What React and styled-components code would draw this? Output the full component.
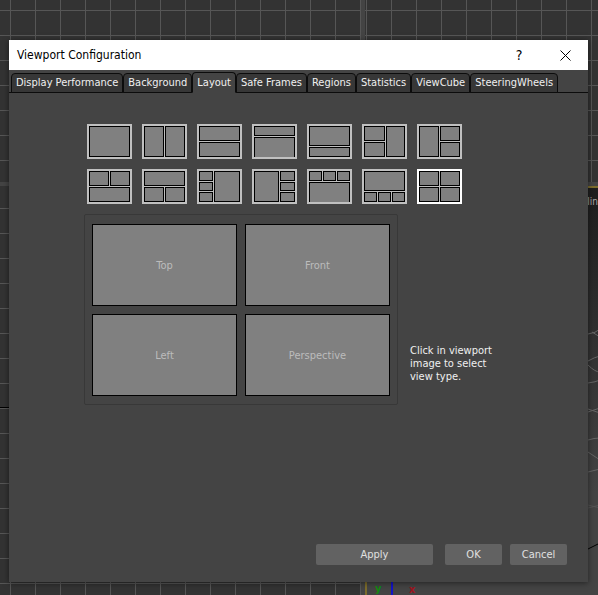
import { useState } from 'react';
import styled, { createGlobalStyle } from 'styled-components';

const tabs = [
    'Display Performance', 'Background', 'Layout', 'Safe Frames',
    'Regions', 'Statistics', 'ViewCube', 'SteeringWheels',
];

const layouts = [
    { name: 'Single', panes: 'a', grid: '"a" 1fr / 1fr' },
    { name: 'Two columns', panes: 'ab', grid: '"a b" 1fr / 1fr 1fr' },
    { name: 'Two rows', panes: 'ab', grid: '"a" 1fr "b" 1fr / 1fr' },
    { name: 'Short top', panes: 'ab', grid: '"a" 1fr "b" 2fr / 1fr', openEnd: true },
    { name: 'Short bottom', panes: 'ab', grid: '"a" 2fr "b" 1fr / 1fr' },
    { name: 'Two left, one right', panes: 'abc', grid: '"a c" 1fr "b c" 1fr / 21fr 19fr' },
    { name: 'One left, two right', panes: 'abc', grid: '"a b" 1fr "a c" 1fr / 1fr 1fr' },
    { name: 'Two top, one bottom', panes: 'abc', grid: '"a b" 1fr "c c" 1fr / 1fr 1fr' },
    { name: 'One top, two bottom', panes: 'abc', grid: '"a a" 1fr "b c" 1fr / 1fr 1fr' },
    { name: 'Three left, one right', panes: 'abcd', grid: '"a d" 10fr "b d" 9fr "c d" 10fr / 14fr 26fr' },
    { name: 'One left, three right', panes: 'abcd', grid: '"a b" 10fr "a c" 9fr "a d" 10fr / 25fr 15fr' },
    { name: 'Three top, one bottom', panes: 'abcd', grid: '"a b c" 1fr "d d d" 2fr / 1fr 1fr 1fr', openEnd: true },
    { name: 'One top, three bottom', panes: 'abcd', grid: '"a a a" 2fr "b c d" 1fr / 1fr 1fr 1fr' },
    { name: 'Quad', panes: 'abcd', grid: '"a b" 1fr "c d" 1fr / 1fr 1fr' },
];

const App = () => {
    const [activeTab, setActiveTab] = useState('Layout');
    const [activeLayout, setActiveLayout] = useState('Quad');

    return (
        <Desktop>
            <GlobalStyle />
            <Backdrop>
                <GridView $x={10} $y={10} />
                <GridView $x={1} $y={10} />
                <GridView $x={10} $y={22} $axis />
                <PerspectiveView>
                    <ViewLabel>lin</ViewLabel>
                    <Scene aria-hidden="true">
                        <g fill="none" stroke="#666">
                            <path d="M221 146 Q229 145 233 141 M225 144 L233 149" />
                            <path d="M221 173 Q228 169 233 168 M221 177 Q228 184 233 184" />
                            <path d="M221 195 Q229 194 233 192 M221 221 L233 225 M221 224 L233 220" />
                            <path d="M221 252 Q227 250 233 250 M221 264 L233 272 M221 284 L233 281" />
                            <path d="M221 317 L233 320 M221 320 L233 317" stroke="#555" />
                        </g>
                        <path d="M221 361 L233 355" stroke="#000" />
                        <path d="M25 390 V409" stroke="#1414c8" strokeWidth="2" />
                        <text x="8" y="404" fill="#128a12">y</text>
                        <text x="42" y="405" fill="#a01420">x</text>
                    </Scene>
                </PerspectiveView>
            </Backdrop>

            <Dialog role="dialog" aria-labelledby="dialog-title">
                <TitleBar>
                    <Title id="dialog-title">Viewport Configuration</Title>
                    <TitleButton aria-label="Help">?</TitleButton>
                    <TitleButton aria-label="Close">
                        <svg width="11" height="11" viewBox="0 0 11 11" stroke="#000">
                            <path d="M0.5 0.5 L10.5 10.5 M10.5 0.5 L0.5 10.5" />
                        </svg>
                    </TitleButton>
                </TitleBar>

                <TabStrip role="tablist">
                    {tabs.map((tab) => (
                        <Tab
                            key={tab}
                            role="tab"
                            aria-selected={tab === activeTab}
                            $active={tab === activeTab}
                            onClick={() => setActiveTab(tab)}
                        >
                            {tab}
                        </Tab>
                    ))}
                </TabStrip>

                <Panel role="tabpanel">
                    <LayoutPicker>
                        {layouts.map(({ name, panes, grid, openEnd }) => (
                            <LayoutButton
                                key={name}
                                aria-label={name}
                                aria-pressed={name === activeLayout}
                                $active={name === activeLayout}
                                $grid={grid}
                                onClick={() => setActiveLayout(name)}
                            >
                                {panes.split('').map((area, i) => (
                                    <Pane key={area} $area={area} $open={openEnd && i === panes.length - 1} />
                                ))}
                            </LayoutButton>
                        ))}
                    </LayoutPicker>
                    <PreviewRow>
                        <Preview>
                            <ViewButton>Top</ViewButton>
                            <ViewButton>Front</ViewButton>
                            <ViewButton>Left</ViewButton>
                            <ViewButton>Perspective</ViewButton>
                        </Preview>
                        <Hint>Click in viewport image to select view type.</Hint>
                    </PreviewRow>
                </Panel>

                <Footer>
                    <ActionButton $wide>Apply</ActionButton>
                    <ActionButton>OK</ActionButton>
                    <ActionButton>Cancel</ActionButton>
                </Footer>
            </Dialog>
        </Desktop>
    );
};

const GlobalStyle = createGlobalStyle`
    * {
        box-sizing: border-box;
    }

    body {
        margin: 0;
        background: #444;
        color: #f0f0f0;
        font-family: "DejaVu Sans Condensed", "DejaVu Sans", Tahoma, sans-serif;
        font-size: 11px;
        line-height: 13px;
    }

    button {
        margin: 0;
        padding: 0;
        border: none;
        color: inherit;
        font: inherit;
    }
`;

const Desktop = styled.main`
    display: grid;
    grid-template: "stack" minmax(100vh, auto) / minmax(0, 1fr);
`;

const Backdrop = styled.div`
    grid-area: stack;
    display: grid;
    grid-template: 182fr 409fr / 361fr 233fr;
    gap: 4px;
    background: #444;
`;

const GridView = styled.div`
    background-color: #333;
    background-image:
        linear-gradient(${(props) => (props.$axis ? '#000, #000' : 'transparent, transparent')}),
        linear-gradient(90deg, #565656 1px, transparent 1px),
        linear-gradient(#565656 1px, transparent 1px);
    background-size: 100% 1px, 25px 25px, 25px 25px;
    background-position: 0 221px, ${(props) => props.$x}px 0, 0 ${(props) => props.$y}px;
    background-repeat: no-repeat, repeat, repeat;
`;

const PerspectiveView = styled.div`
    display: grid;
    border: solid #7c6c2c;
    border-width: 2px 0 0 2px;
    background: linear-gradient(#1e1e1e, #444 75%);
    overflow: hidden;
`;

const ViewLabel = styled.span`
    grid-area: 1 / 1;
    justify-self: end;
    padding-top: 7px;
    color: #aaa;
    font-size: 10px;
`;

const Scene = styled.svg`
    grid-area: 1 / 1;
    width: 100%;
    height: 100%;
    font-size: 11px;
    font-weight: bold;
`;

const Dialog = styled.section`
    grid-area: stack;
    display: flex;
    flex-direction: column;
    margin: 40px 10px 13px 9px;
    background: #444;
    box-shadow: 0 1px 6px rgba(0, 0, 0, 0.5);
`;

const TitleBar = styled.header`
    display: flex;
    align-items: center;
    height: 30px;
    padding-left: 8px;
    background: #fff;
    color: #000;
`;

const Title = styled.h1`
    flex: 1;
    margin: 0;
    font-size: 12px;
    font-weight: normal;
`;

const TitleButton = styled.button`
    display: grid;
    place-items: center;
    width: 46px;
    height: 28px;
    background: transparent;
    font-size: 14px;
`;

const TabStrip = styled.div`
    display: flex;
    align-items: flex-end;
    height: 23px;
    padding-left: 2px;
    box-shadow: inset 0 -1px #0c0c0c;
`;

const Tab = styled.button`
    height: ${(props) => (props.$active ? '21px' : '20px')};
    padding: ${(props) => (props.$active ? '0 4px' : '0 4px 2px')};
    border: 1px solid #0c0c0c;
    border-bottom-color: ${(props) => (props.$active ? '#444' : '#0c0c0c')};
    border-radius: 4px 4px 0 0;
    background: ${(props) => (props.$active ? '#444' : '#373737')};
    white-space: nowrap;
`;

const Panel = styled.div`
    flex: 1;
    padding: 31px 20px 20px 75px;
`;

const LayoutPicker = styled.div`
    display: grid;
    grid-template-columns: repeat(7, 45px);
    gap: 10px;
    padding-left: 3px;
`;

const LayoutButton = styled.button`
    display: grid;
    grid-template: ${(props) => props.$grid};
    gap: 1px;
    height: 35px;
    border: 2px solid ${(props) => (props.$active ? '#fff' : '#c0c0c0')};
    background: #c0c0c0;
`;

const Pane = styled.span`
    grid-area: ${(props) => props.$area};
    border: solid #000;
    border-width: ${(props) => (props.$open ? '1px 1px 0' : '1px')};
    background: #808080;
`;

const PreviewRow = styled.div`
    display: flex;
    align-items: flex-end;
    gap: 12px;
    margin-top: 10px;
`;

const Preview = styled.div`
    display: grid;
    grid-template-columns: repeat(2, 145px);
    grid-auto-rows: 82px;
    gap: 8px;
    padding: 9px 7px 8px;
    border: 1px solid #383838;
    border-radius: 2px;
`;

const ViewButton = styled.button`
    border: 1px solid #000;
    background: #808080;
    color: #bcbcbc;
`;

const Hint = styled.p`
    width: 90px;
    margin: 0 0 22px;
`;

const Footer = styled.footer`
    display: flex;
    justify-content: flex-end;
    gap: 8px;
    padding: 0 21px 17px;
`;

const ActionButton = styled.button`
    width: ${(props) => (props.$wide ? '117px' : '57px')};
    height: 21px;
    margin-right: ${(props) => (props.$wide ? '4px' : '0')};
    border-radius: 2px;
    background: #626262;
    color: #e0e0e0;
`;

export default App;
